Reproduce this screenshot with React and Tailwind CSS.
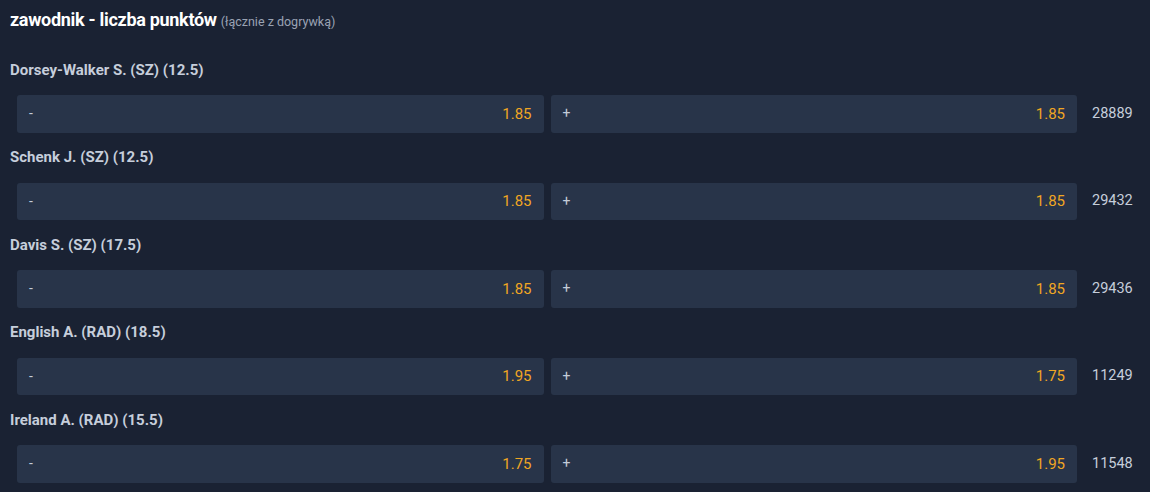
import React from "react";

const rows = [
  { name: "Dorsey-Walker S. (SZ) (12.5)", a: "1.85", b: "1.85", id: "28889" },
  { name: "Schenk J. (SZ) (12.5)", a: "1.85", b: "1.85", id: "29432" },
  { name: "Davis S. (SZ) (17.5)", a: "1.85", b: "1.85", id: "29436" },
  { name: "English A. (RAD) (18.5)", a: "1.95", b: "1.75", id: "11249" },
  { name: "Ireland A. (RAD) (15.5)", a: "1.75", b: "1.95", id: "11548" },
];

function Btn({ label, odd }) {
  return (
    <div className="flex-1 h-[37.5px] rounded-[3px] bg-[#283449] flex items-center justify-between pl-[12px] pr-[12px]">
      <span className="text-[#c4ccd9] text-[14px]">{label}</span>
      <span className="text-[#f0a623] text-[15px]">{odd}</span>
    </div>
  );
}

export default function App() {
  return (
    <div
      className="w-[1150px] h-[492px] bg-[#1a2233] pl-[10px] overflow-hidden"
      style={{ fontFamily: "Roboto, 'Liberation Sans', sans-serif" }}
    >
      <div className="h-[45px] pt-[6px] flex items-baseline">
        <span className="text-white font-bold text-[18px] tracking-[-0.3px]">zawodnik - liczba punktów</span>
        <span className="text-[#9aa3b3] text-[12.5px] ml-[4px]">(łącznie z dogrywką)</span>
      </div>
      {rows.map((r, i) => (
        <div key={i}>
          <div className="h-[50px] flex items-center">
            <span className="text-[#c6cedb] font-bold text-[15px]">{r.name}</span>
          </div>
          <div className="flex items-center pl-[7px]">
            <div className="w-[1060px] flex gap-[7px]">
              <Btn label="-" odd={r.a} />
              <Btn label="+" odd={r.b} />
            </div>
            <span className="ml-[15px] text-[#c6cedb] text-[14.5px]">{r.id}</span>
          </div>
        </div>
      ))}
    </div>
  );
}
